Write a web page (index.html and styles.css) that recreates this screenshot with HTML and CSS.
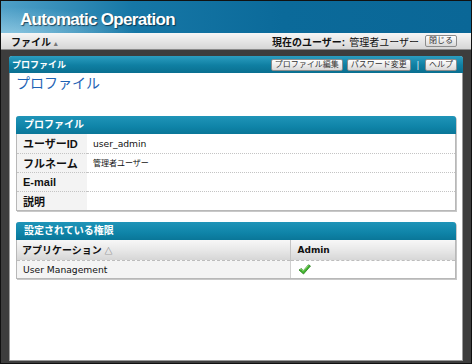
FILE: index.html
```html
<!DOCTYPE html>
<html lang="ja">
<head>
    <meta charset="UTF-8">
    <title>Automatic Operation - プロファイル</title>
    <link rel="stylesheet" href="styles.css">
</head>
<body>
    <div class="app">
        <header class="banner">
            <h1>Automatic Operation</h1>
        </header>
        <nav class="menubar">
            <span class="menu">ファイル <span class="caret">&#9652;</span></span>
            <span class="current-user">
                <b>現在のユーザー:</b> 管理者ユーザー
                <button class="btn">閉じる</button>
            </span>
        </nav>
        <main class="desk">
            <section class="panel">
                <div class="panel-head">
                    <span class="panel-title">プロファイル</span>
                    <div class="tools">
                        <button class="btn">プロファイル編集</button>
                        <button class="btn">パスワード変更</button>
                        <span class="sep">|</span>
                        <button class="btn">ヘルプ</button>
                    </div>
                </div>
                <div class="panel-body">
                    <h2 class="page-title">プロファイル</h2>

                    <div class="box">
                        <div class="box-head">プロファイル</div>
                        <table class="props">
                            <tr><th>ユーザーID</th><td class="latin">user_admin</td></tr>
                            <tr><th>フルネーム</th><td class="jp">管理者ユーザー</td></tr>
                            <tr><th>E-mail</th><td></td></tr>
                            <tr><th>説明</th><td></td></tr>
                        </table>
                    </div>

                    <div class="box perms-box">
                        <div class="box-head">設定されている権限</div>
                        <table class="perms">
                            <tr>
                                <th class="app-col">アプリケーション <span class="sort">&#9651;</span></th>
                                <th class="latin">Admin</th>
                            </tr>
                            <tr>
                                <td class="app-col latin">User Management</td>
                                <td>
                                    <svg class="check" width="13" height="11" viewBox="0 0 13 11">
                                        <path d="M1 6 L3.5 4.5 L5.2 6.8 L10.5 0.8 L12.5 2 L5.5 10 Z" fill="#3fb52c" stroke="#2a7a1e" stroke-width="0.8" stroke-linejoin="round"/>
                                        <path d="M2.2 5.6 L3.5 4.9 L5.2 7.2 L10.6 1.3" fill="none" stroke="#a6e68f" stroke-width="0.7"/>
                                    </svg>
                                </td>
                            </tr>
                        </table>
                    </div>
                </div>
            </section>
        </main>
    </div>
</body>
</html>
```

FILE: styles.css
```css
* {
    box-sizing: border-box;
}
body {
    margin: 0;
    font-family: "Liberation Sans", "Noto Sans CJK JP", sans-serif;
    color: #111;
}
.app {
    width: 472px;
    height: 364px;
    border: 1px solid #111;
    display: flex;
    flex-direction: column;
    background: #3d3d3d;
}
.banner {
    height: 32px;
    padding: 9px 0 0 19px;
    background:
        radial-gradient(ellipse 180px 40px at 10px 34px, rgba(190, 230, 245, .55), rgba(190, 230, 245, 0) 70%),
        linear-gradient(to right, #4fa0c8, #1677a6 28%, #0b6a9a 60%, #0a6797);
}
.banner h1 {
    margin: 0;
    font-size: 17px;
    line-height: 20px;
    letter-spacing: -0.7px;
    color: #fff;
    text-shadow: 1px 1px 1px rgba(0, 30, 50, .7);
}
.menubar {
    height: 17px;
    display: flex;
    align-items: center;
    justify-content: space-between;
    padding: 0 14px 0 10px;
    background: linear-gradient(#f6f6f6, #d6d6d6);
    border-bottom: 1px solid #8a8a8a;
    font-size: 10px;
}
.menu {
    font-weight: bold;
}
.caret {
    font-size: 7px;
    color: #777;
}
.current-user {
    display: flex;
    align-items: center;
    gap: 4px;
}
.btn {
    height: 12px;
    padding: 0 3px;
    border: 1px solid #8c8c8c;
    border-radius: 2px;
    background: linear-gradient(#ffffff, #d9d9d9);
    font-family: "Liberation Sans", "Noto Sans CJK JP", sans-serif;
    font-size: 8px;
    line-height: 10px;
    color: #333;
}
.current-user .btn {
    margin-left: 2px;
}
.desk {
    flex: 1;
    display: flex;
    padding: 6px 8px 2px 8px;
}
.panel {
    flex: 1;
    display: flex;
    flex-direction: column;
    background: #fff;
    border: 1px solid #9a9a9a;
    border-top: none;
    border-radius: 3px 3px 0 0;
}
.panel-head {
    height: 17px;
    display: flex;
    align-items: center;
    justify-content: space-between;
    padding: 0 6px 0 3px;
    background: linear-gradient(#2b9dc0, #0f7fa2 55%, #0a6f90);
    border-radius: 3px 3px 0 0;
    margin: 0 -1px;
}
.panel-title {
    color: #fff;
    font-size: 9px;
    font-weight: bold;
}
.tools {
    display: flex;
    align-items: center;
    gap: 4px;
}
.sep {
    color: #d8eef5;
    font-size: 9px;
    margin: 0 2px;
}
.panel-body {
    flex: 1;
    padding: 1px 6px 0 6px;
}
.page-title {
    margin: 0 0 24px 0;
    font-size: 14px;
    line-height: 18px;
    font-weight: normal;
    color: #1e63b5;
}
.box {
    border: 1px solid #b8b8b8;
    border-top: none;
    border-radius: 3px 3px 0 0;
    box-shadow: 1px 1px 0 #c8c8c8;
}
.box-head {
    height: 18px;
    padding-left: 8px;
    line-height: 18px;
    font-size: 10px;
    font-weight: bold;
    color: #fff;
    background: linear-gradient(#1f94b8, #0f84a8 60%, #0a7698);
    border-radius: 3px 3px 0 0;
    margin: 0 -1px;
}
.props, .perms {
    width: 100%;
    border-collapse: collapse;
}
.props th, .props td {
    height: 19px;
    border-bottom: 1px dotted #c4c4c4;
    text-align: left;
    vertical-align: middle;
}
.props tr:last-child th, .props tr:last-child td {
    border-bottom: none;
    height: 18px;
}
.props th {
    width: 70px;
    padding-left: 6px;
    background: #f3f3f3;
    font-size: 11px;
}
.props td {
    padding-left: 6px;
}
.latin {
    font-family: "DejaVu Sans", sans-serif;
    font-size: 9.2px;
}
.jp {
    font-size: 8px;
}
.perms-box {
    margin-top: 11px;
}
.perms th {
    height: 21px;
    padding-left: 5px;
    text-align: left;
    font-size: 10px;
    background: linear-gradient(#f7f7f7, #e8e8e8 50%, #d6d6d6);
    border-bottom: 1px dashed #bdbdbd;
}
.perms th.latin {
    font-size: 9px;
    padding-left: 7px;
    border-left: 1px solid #c4c4c4;
}
.perms td {
    height: 17px;
    padding-left: 7px;
    border-left: 1px solid #d0d0d0;
}
.perms td.app-col {
    width: 273px;
    padding-left: 6px;
    border-left: none;
    background: #f4f4f4;
}
.sort {
    font-size: 8px;
    font-weight: normal;
    color: #666;
}
.check {
    display: block;
}
```
